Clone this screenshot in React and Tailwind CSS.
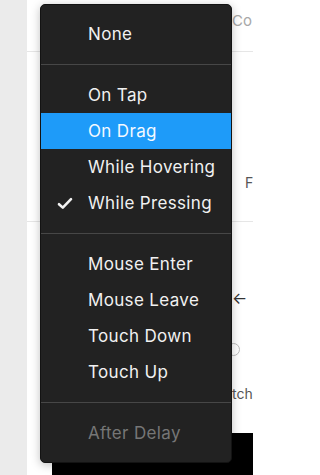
import React from "react";

const groups = [
  [{ label: "None" }],
  [
    { label: "On Tap" },
    { label: "On Drag", active: true },
    { label: "While Hovering" },
    { label: "While Pressing", checked: true },
  ],
  [
    { label: "Mouse Enter" },
    { label: "Mouse Leave" },
    { label: "Touch Down" },
    { label: "Touch Up" },
  ],
  [{ label: "After Delay", disabled: true }],
];

function Check() {
  return (
    <svg width="16" height="13" viewBox="0 0 16 13" className="absolute left-[16px] top-[12px]">
      <path
        d="M2 7.2 L5.8 10.6 L14 2.2"
        fill="none"
        stroke="#f2f2f2"
        strokeWidth="2.6"
        strokeLinecap="round"
        strokeLinejoin="round"
      />
    </svg>
  );
}

function MenuItem({ item }) {
  let cls = "text-[#f1f1f1]";
  if (item.active) cls = "bg-[#1e9bf9] text-[#f4f9ff]";
  if (item.disabled) cls = "text-[#767676]";
  return (
    <div className={`relative flex h-9 items-center pl-[47px] text-[17px] tracking-[0.02em] ${cls}`}>
      {item.checked && <Check />}
      <span className="leading-none">{item.label}</span>
    </div>
  );
}

export default function App() {
  return (
    <div
      className="relative flex h-[475px] w-[253px] overflow-hidden bg-white"
      style={{ fontFamily: "Inter, 'Noto Sans', sans-serif" }}
    >
      <div className="w-[27px] shrink-0 bg-[#ebebeb]" />

      {/* panel behind the menu */}
      <div className="flex flex-1 flex-col bg-white">
        <div className="flex h-[52px] items-center border-b border-[#e6e6e6] pl-[205px] text-[15px] text-[#a8a8a8]">
          <span className="-mt-[8px]">Co</span>
        </div>
        <div className="flex h-[170px] items-end border-b border-[#e6e6e6] pb-[28px] pl-[218px] text-[14px] text-[#555]">
          F
        </div>
        <div className="flex h-[84px] items-end pl-[205px] text-[16px] text-[#333]">
          <span className="leading-none">←</span>
        </div>
        <div className="flex h-[50px] items-end pl-[200px]">
          <span className="h-[13px] w-[13px] rounded-full border border-[#bbb]" />
        </div>
        <div className="flex h-[45px] items-end pl-[205px] text-[14px] text-[#555]">
          <span className="leading-none">tch</span>
        </div>
        <div className="mt-auto ml-[25px] h-[42px] bg-black" />
      </div>

      {/* dropdown */}
      <div className="absolute left-[40px] top-[4px] w-[192px] rounded-[5px] border border-[#131313] bg-[#222222] py-[11px] shadow-[0_2px_10px_rgba(0,0,0,0.25)]">
        {groups.map((group, gi) => (
          <div key={gi}>
            {gi > 0 && <div className="my-3 h-px bg-[#474747]" />}
            {group.map((item) => (
              <MenuItem key={item.label} item={item} />
            ))}
          </div>
        ))}
      </div>
    </div>
  );
}
